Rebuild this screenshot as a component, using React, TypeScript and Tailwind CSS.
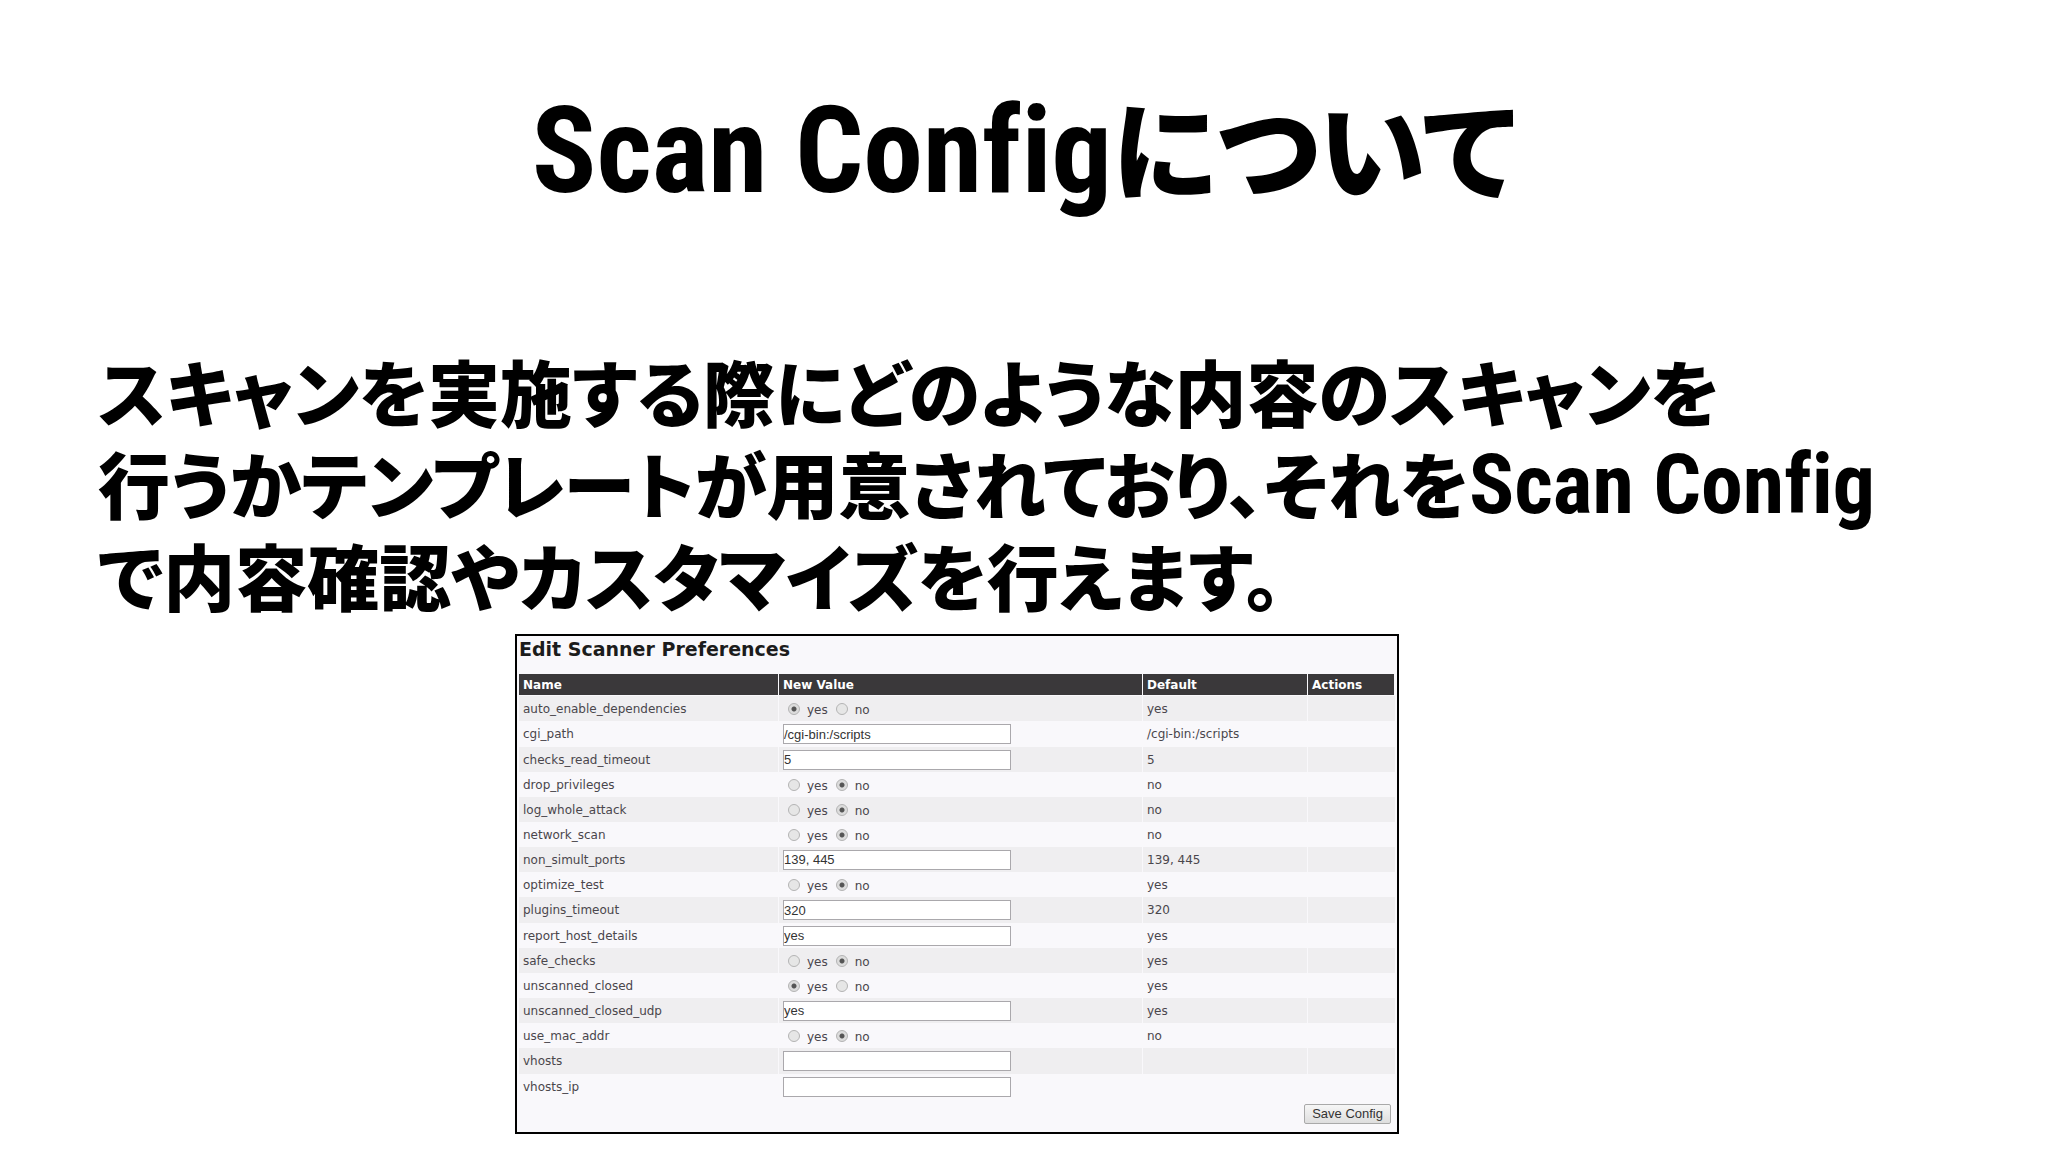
import React from 'react';

type Preference = {
  name: string;
  type: 'radio' | 'text';
  value: string;
  fallback: string;
  tall?: boolean;
};

const preferences: Preference[] = [
  { name: 'auto_enable_dependencies', type: 'radio', value: 'yes', fallback: 'yes' },
  { name: 'cgi_path', type: 'text', value: '/cgi-bin:/scripts', fallback: '/cgi-bin:/scripts', tall: true },
  { name: 'checks_read_timeout', type: 'text', value: '5', fallback: '5' },
  { name: 'drop_privileges', type: 'radio', value: 'no', fallback: 'no' },
  { name: 'log_whole_attack', type: 'radio', value: 'no', fallback: 'no' },
  { name: 'network_scan', type: 'radio', value: 'no', fallback: 'no' },
  { name: 'non_simult_ports', type: 'text', value: '139, 445', fallback: '139, 445' },
  { name: 'optimize_test', type: 'radio', value: 'no', fallback: 'yes' },
  { name: 'plugins_timeout', type: 'text', value: '320', fallback: '320', tall: true },
  { name: 'report_host_details', type: 'text', value: 'yes', fallback: 'yes' },
  { name: 'safe_checks', type: 'radio', value: 'no', fallback: 'yes' },
  { name: 'unscanned_closed', type: 'radio', value: 'yes', fallback: 'yes' },
  { name: 'unscanned_closed_udp', type: 'text', value: 'yes', fallback: 'yes' },
  { name: 'use_mac_addr', type: 'radio', value: 'no', fallback: 'no' },
  { name: 'vhosts', type: 'text', value: '', fallback: '', tall: true },
  { name: 'vhosts_ip', type: 'text', value: '', fallback: '' },
];

const RadioPair = ({ name, value }: { name: string; value: string }) => (
  <div className="flex items-center gap-2 pl-[5px]">
    {['yes', 'no'].map((option) => (
      <label key={option} className="flex items-center gap-[7px]">
        <input
          type="radio"
          name={name}
          value={option}
          defaultChecked={value === option}
          className="h-3 w-3 appearance-none rounded-full border border-[#b4b4b4] bg-[#e6e6e6] checked:bg-[radial-gradient(circle,#555_0,#555_2px,#dcdcdc_3px)]"
        />
        <span className="mt-[2px]">{option}</span>
      </label>
    ))}
  </div>
);

const ScannerPreferences = () => (
  <form className="ml-[515px] max-w-[884px] border-2 border-black bg-[#f9f8fb] px-[2px] pb-2 font-['DejaVu_Sans',sans-serif] text-[12px] text-[#4a464c]">
    <h2 className="h-[38px] text-[19px] leading-[26px] font-bold text-[#1c1c1c]">Edit Scanner Preferences</h2>
    <table className="w-full table-fixed border-separate border-spacing-0">
      <colgroup>
        <col className="w-[260px]" />
        <col className="w-[364px]" />
        <col className="w-[165px]" />
        <col />
      </colgroup>
      <thead>
        <tr className="h-[22px] text-left text-white">
          {['Name', 'New Value', 'Default', 'Actions'].map((title) => (
            <th key={title} className="border-r border-b border-[#f9f8fb] bg-[#3a383a] p-0 pl-1 leading-4 font-bold">
              {title}
            </th>
          ))}
        </tr>
      </thead>
      <tbody>
        {preferences.map((pref) => (
          <tr key={pref.name} className={`odd:bg-[#efeef0] ${pref.tall ? 'h-[26px]' : 'h-[25px]'}`}>
            <td className="border-r border-[#f9f8fb] p-0 pl-1 leading-4">{pref.name}</td>
            <td className="border-r border-[#f9f8fb] p-0 pl-1 leading-4">
              {pref.type === 'radio' ? (
                <RadioPair name={pref.name} value={pref.value} />
              ) : (
                <input
                  type="text"
                  aria-label={pref.name}
                  defaultValue={pref.value}
                  className="block h-5 w-[228px] border border-[#aaa8ac] bg-white font-['Liberation_Sans',sans-serif] text-[13px] text-[#333]"
                />
              )}
            </td>
            <td className="border-r border-[#f9f8fb] p-0 pl-1 leading-4">{pref.fallback}</td>
            <td className="p-0"></td>
          </tr>
        ))}
      </tbody>
    </table>
    <div className="mt-[5px] flex justify-end pr-1">
      <button
        type="button"
        className="h-5 rounded-xs border border-[#a9a9a9] bg-linear-to-b from-[#f6f6f6] to-[#dedede] px-[7px] font-['Liberation_Sans',sans-serif] text-[13px] leading-4 text-[#333]"
      >
        Save Config
      </button>
    </div>
  </form>
);

const App = () => {
  return (
    <main className="min-h-screen bg-white font-['Noto_Sans_CJK_JP',sans-serif] text-black">
      <h1 className="pt-[73px] text-center text-[108px] leading-[144px] font-black [font-feature-settings:'palt']">
        <span className="font-['Roboto_Condensed',sans-serif] text-[120px] leading-none font-bold [font-variant-ligatures:none]">
          Scan Config
        </span>
        について
      </h1>
      <p className="mt-[127px] mb-[14px] pl-[98px] text-[72px] leading-[92px] font-black whitespace-nowrap [font-feature-settings:'palt']">
        スキャンを実施する際にどのような内容のスキャンを
        <br />
        行うかテンプレートが用意されており、それを
        <span className="font-['Roboto_Condensed',sans-serif] text-[84px] leading-none font-bold [font-variant-ligatures:none]">
          Scan Config
        </span>
        <br />
        で内容確認やカスタマイズを行えます。
      </p>
      <ScannerPreferences />
    </main>
  );
};

export default App;
